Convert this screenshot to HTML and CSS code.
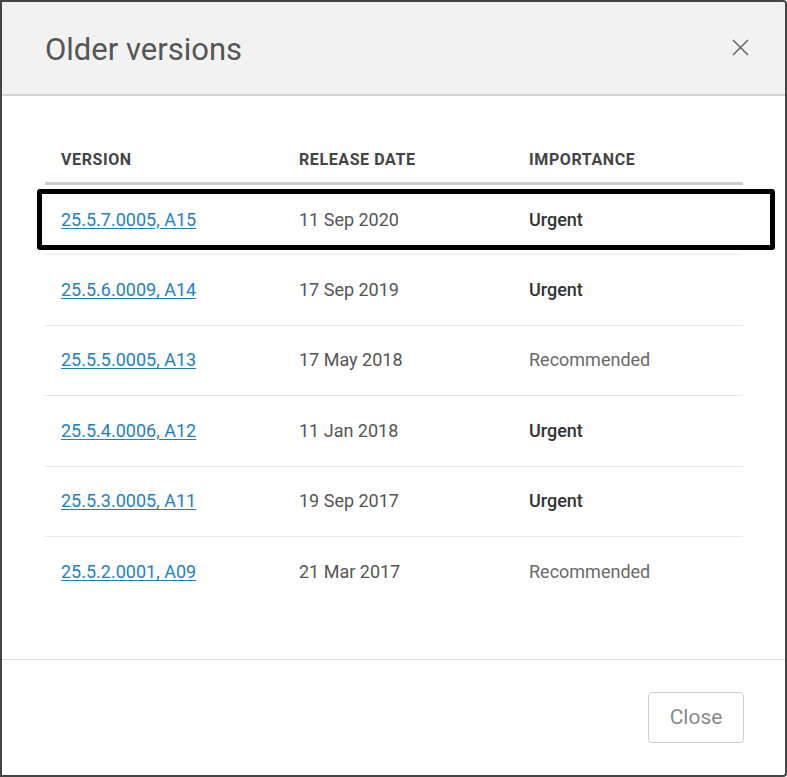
FILE: index.html
```html
<!DOCTYPE html>
<html>
<head>
<meta charset="utf-8">
<link rel="stylesheet" href="styles.css">
</head>
<body>
<div class="dialog">
  <div class="dialog-header">
    <h1 class="title">Older versions</h1>
    <span class="close-x">
      <svg width="17" height="17" viewBox="0 0 17 17"><path d="M1 1 L16 16 M16 1 L1 16" stroke="#666" stroke-width="1.5" fill="none"/></svg>
    </span>
  </div>
  <div class="dialog-body">
    <div class="grid">
      <div class="row head">
        <div class="cell">VERSION</div>
        <div class="cell">RELEASE DATE</div>
        <div class="cell">IMPORTANCE</div>
      </div>
      <div class="row highlighted">
        <div class="cell"><a href="#" class="link">25.5.7.0005, A15</a></div>
        <div class="cell date">11 Sep 2020</div>
        <div class="cell urgent">Urgent</div>
        <div class="highlight-box"></div>
      </div>
      <div class="row">
        <div class="cell"><a href="#" class="link">25.5.6.0009, A14</a></div>
        <div class="cell date">17 Sep 2019</div>
        <div class="cell urgent">Urgent</div>
      </div>
      <div class="row">
        <div class="cell"><a href="#" class="link">25.5.5.0005, A13</a></div>
        <div class="cell date">17 May 2018</div>
        <div class="cell rec">Recommended</div>
      </div>
      <div class="row">
        <div class="cell"><a href="#" class="link">25.5.4.0006, A12</a></div>
        <div class="cell date">11 Jan 2018</div>
        <div class="cell urgent">Urgent</div>
      </div>
      <div class="row">
        <div class="cell"><a href="#" class="link">25.5.3.0005, A11</a></div>
        <div class="cell date">19 Sep 2017</div>
        <div class="cell urgent">Urgent</div>
      </div>
      <div class="row last">
        <div class="cell"><a href="#" class="link">25.5.2.0001, A09</a></div>
        <div class="cell date">21 Mar 2017</div>
        <div class="cell rec">Recommended</div>
      </div>
    </div>
  </div>
  <div class="dialog-footer">
    <button class="btn-close">Close</button>
  </div>
</div>
</body>
</html>
```
FILE: styles.css
```css
html, body {
  margin: 0;
  padding: 0;
  background: #ffffff;
}
body {
  font-family: Roboto, "Liberation Sans", Arial, sans-serif;
  width: 787px;
  height: 777px;
}
.dialog {
  box-sizing: border-box;
  width: 787px;
  height: 777px;
  border: 2px solid #444444;
  border-radius: 0 4px 4px 0;
  background: #ffffff;
  display: flex;
  flex-direction: column;
  overflow: hidden;
}
.dialog-header {
  height: 92px;
  flex: 0 0 92px;
  background: #f2f2f2;
  border-bottom: 2px solid #d4d4d4;
  display: flex;
  align-items: center;
  justify-content: space-between;
  padding: 0 36px 0 43px;
}
.title {
  margin: 0;
  font-size: 31px;
  font-weight: 400;
  color: #555555;
  padding-top: 2px;
}
.close-x {
  display: flex;
  padding-bottom: 2px;
}
.dialog-body {
  flex: 1;
  padding: 40px 41px 0 43px;
}
.grid {
  width: 698px;
}
.row {
  position: relative;
  display: grid;
  grid-template-columns: 238px 230px 230px;
  height: 70.4px;
  box-sizing: border-box;
  border-bottom: 1px solid #e6e6e6;
  align-items: center;
}
.row.last {
  border-bottom: none;
}
.row.head {
  height: 49px;
  border-bottom: 3px solid #cdcdcd;
  padding-top: 2px;
}
.head .cell {
  font-size: 16px;
  font-weight: 700;
  color: #444444;
  letter-spacing: 0.6px;
}
.cell {
  padding-left: 16px;
  font-size: 18px;
  line-height: 20px;
}
.link {
  color: #1f7fc4;
  text-decoration: underline;
  text-underline-offset: 2px;
}
.date {
  color: #555555;
}
.urgent {
  color: #333333;
  font-weight: 500;
}
.rec {
  color: #6a6a6a;
}
.highlight-box {
  position: absolute;
  left: -8px;
  right: -32px;
  top: 4px;
  bottom: 4px;
  border: 5px solid #000000;
  border-radius: 3px;
  pointer-events: none;
}
.dialog-footer {
  flex: 0 0 auto;
  border-top: 1px solid #e0e0e0;
  height: 116px;
  box-sizing: border-box;
  display: flex;
  justify-content: flex-end;
  align-items: flex-start;
  padding: 32px 41px 0 0;
}
.btn-close {
  width: 96px;
  height: 51px;
  border: 1px solid #cccccc;
  border-radius: 4px;
  background: #ffffff;
  color: #8a8a8a;
  font-family: Roboto, "Liberation Sans", Arial, sans-serif;
  font-size: 21px;
  padding-bottom: 3px;
}
```
